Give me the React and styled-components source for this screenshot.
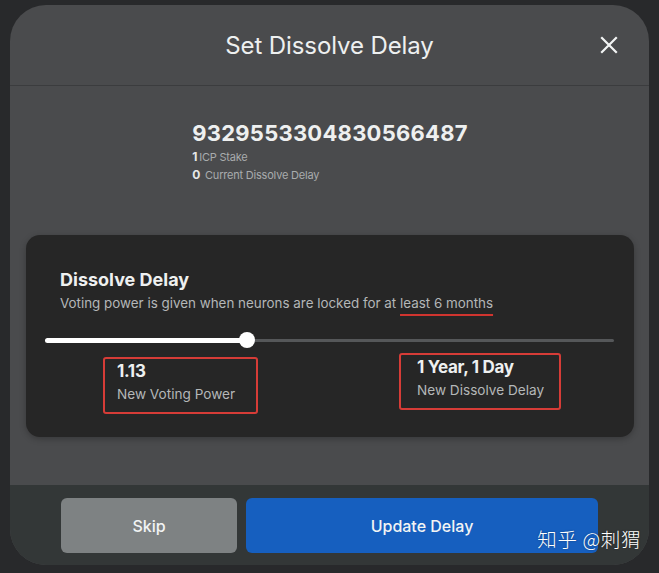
import React from 'react';
import styled, { createGlobalStyle } from 'styled-components';

const GlobalStyle = createGlobalStyle`
  body {
    margin: 0;
    background-color: #28292b;
    font-family: Inter, "Noto Sans", "Noto Sans CJK SC", sans-serif;
  }
`;

const Page = styled.div`
  width: 659px;
  height: 573px;
  padding: 5px 10px 0;
  box-sizing: border-box;
`;

const Modal = styled.div`
  position: relative;
  width: 639px;
  height: 560px;
  border-radius: 36px;
  overflow: hidden;
  display: flex;
  flex-direction: column;
  background-color: #4a4b4d;
`;

const Header = styled.div`
  height: 80px;
  flex-shrink: 0;
  display: flex;
  align-items: center;
  justify-content: center;
  position: relative;
  border-bottom: 1px solid #3b3c3e;
`;

const Title = styled.h1`
  margin: 0;
  font-size: 24px;
  font-weight: 400;
  color: #eef0f0;
  letter-spacing: -0.1px;
`;

const CloseButton = styled.button`
  position: absolute;
  right: 30px;
  top: 30px;
  width: 20px;
  height: 20px;
  padding: 0;
  border: none;
  background: none;
  cursor: pointer;
`;

const Body = styled.div`
  flex: 1;
  padding: 0 15px 0 16px;
  display: flex;
  flex-direction: column;
`;

const Neuron = styled.div`
  align-self: center;
  margin-top: 34px;
  display: flex;
  flex-direction: column;
`;

const NeuronId = styled.div`
  font-size: 22px;
  font-weight: 700;
  color: #eef0f0;
  letter-spacing: 0.25px;
  line-height: 26px;
  margin-bottom: 2px;
`;

const Meta = styled.div`
  font-size: 11px;
  color: #a9acad;
  line-height: 18px;
  height: 18px;
  letter-spacing: -0.2px;

  b {
    color: #e5e7e8;
    font-weight: 700;
    font-size: 12px;
    line-height: 1;
    margin-right: 2px;
  }
`;

const Card = styled.div`
  margin-top: 51px;
  background-color: #262626;
  border-radius: 14px;
  padding: 33px 20px 23px 19px;
  box-shadow: 0 2px 6px rgba(0, 0, 0, 0.25);
`;

const CardHeading = styled.div`
  padding-left: 15px;
`;

const CardTitle = styled.h2`
  margin: 0;
  font-size: 18px;
  font-weight: 700;
  color: #eef0f0;
  line-height: 24px;
`;

const CardText = styled.p`
  margin: 2px 0 0;
  font-size: 13.4px;
  color: #b4b7b8;
  line-height: 18px;
`;

const Mark = styled.span`
  text-decoration: underline;
  text-decoration-color: #d0342f;
  text-decoration-thickness: 2px;
  text-underline-offset: 6px;
`;

const Slider = styled.div`
  position: relative;
  margin-top: 20px;
  height: 16px;
  display: flex;
  align-items: center;
`;

const Track = styled.div`
  flex: 1;
  height: 3px;
  border-radius: 2px;
  background-color: #555759;
  position: relative;
`;

const Fill = styled.div`
  position: absolute;
  left: 0;
  top: -1px;
  height: 5px;
  border-radius: 3px;
  background-color: #ffffff;
`;

const Thumb = styled.div`
  position: absolute;
  top: 50%;
  width: 16px;
  height: 16px;
  margin: -8px 0 0 -8px;
  border-radius: 50%;
  background-color: #ffffff;
`;

const Stats = styled.div`
  display: flex;
  justify-content: space-between;
  align-items: flex-start;
  padding: 0 53px 0 58px;
`;

const Stat = styled.div`
  margin-top: ${(p) => p.$top}px;
  width: ${(p) => p.$width}px;
  box-sizing: border-box;
  padding: 1px 8px 8px ${(p) => p.$indent}px;
  border: 2px solid #d63c37;
  border-radius: 3px;
`;

const StatValue = styled.div`
  font-size: 17px;
  font-weight: 700;
  color: #eef0f0;
  line-height: 22px;
  letter-spacing: -0.3px;
`;

const StatLabel = styled.div`
  margin-top: 2px;
  font-size: 13.6px;
  color: #b4b7b8;
  line-height: 20px;
`;

const Footer = styled.div`
  height: 80px;
  flex-shrink: 0;
  background-color: #333737;
  display: flex;
  align-items: flex-start;
  gap: 9px;
  padding: 13px 51px 0;
  box-sizing: border-box;
`;

const Button = styled.button`
  width: ${(p) => (p.$primary ? 352 : 176)}px;
  height: 55px;
  padding: 0;
  border: none;
  border-radius: 6px;
  background-color: ${(p) => (p.$primary ? '#165fbf' : '#7e8283')};
  color: #f2f4f4;
  font-family: inherit;
  font-size: 16px;
  font-weight: 500;
  cursor: pointer;
`;

const Watermark = styled.div`
  position: absolute;
  right: 8px;
  bottom: 12px;
  font-family: "Noto Sans CJK SC", sans-serif;
  font-size: 19.5px;
  font-weight: 300;
  color: #ffffff;
  text-shadow: 0 0 2px rgba(0, 0, 0, 0.4);
  letter-spacing: 0.6px;
`;

const progress = 35.5;

const App = () => {
  return (
    <Page>
      <GlobalStyle />
      <Modal>
        <Header>
          <Title>Set Dissolve Delay</Title>
          <CloseButton aria-label="close">
            <svg width="20" height="20" viewBox="0 0 20 20">
              <path d="M3 3 L17 17 M17 3 L3 17" stroke="#f2f4f4" strokeWidth="2.2" strokeLinecap="square" />
            </svg>
          </CloseButton>
        </Header>
        <Body>
          <Neuron>
            <NeuronId>9329553304830566487</NeuronId>
            <Meta><b>1</b>ICP Stake</Meta>
            <Meta><b>0</b> Current Dissolve Delay</Meta>
          </Neuron>
          <Card>
            <CardHeading>
              <CardTitle>Dissolve Delay</CardTitle>
              <CardText>
                Voting power is given when neurons are locked for at <Mark>least 6 months</Mark>
              </CardText>
            </CardHeading>
            <Slider>
              <Track>
                <Fill style={{ width: `${progress}%` }} />
                <Thumb style={{ left: `${progress}%` }} />
              </Track>
            </Slider>
            <Stats>
              <Stat $top={9} $width={155} $indent={12}>
                <StatValue>1.13</StatValue>
                <StatLabel>New Voting Power</StatLabel>
              </Stat>
              <Stat $top={5} $width={162} $indent={16}>
                <StatValue>1 Year, 1 Day</StatValue>
                <StatLabel>New Dissolve Delay</StatLabel>
              </Stat>
            </Stats>
          </Card>
        </Body>
        <Footer>
          <Button>Skip</Button>
          <Button $primary>Update Delay</Button>
        </Footer>
        <Watermark>知乎 @刺猬</Watermark>
      </Modal>
    </Page>
  );
};

export default App;
